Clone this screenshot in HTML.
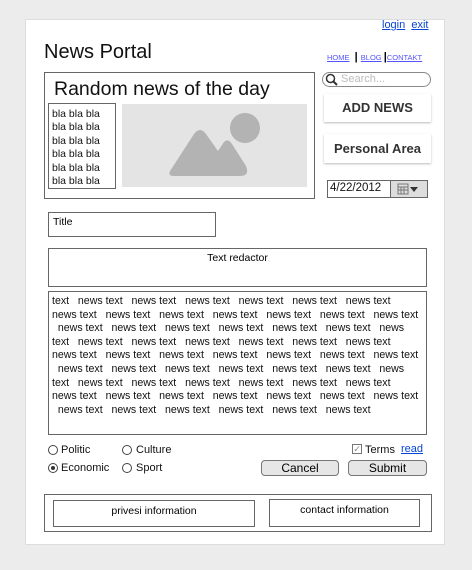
<!DOCTYPE html>
<html><head><style>
body{margin:0;width:472px;height:570px;background:#ececec;font-family:"Liberation Sans",Arial,sans-serif;position:relative;overflow:hidden}
.a{position:absolute}
.card{left:25px;top:19px;width:420px;height:526px;background:#fff;border:1px solid #ddd;box-sizing:border-box}
.box{border:1px solid #666;box-sizing:border-box;background:#fff}
a{color:#0645d6;text-decoration:underline}
.nt{font-size:10.6px;color:#111;white-space:pre;line-height:13.6px;letter-spacing:0}
.btn{background:#fff;box-shadow:0 1px 2px #bbb;font-weight:bold;color:#333;text-align:center;font-size:13px}
.gb{background:#e6e6e6;border:1px solid #777;border-radius:4px;box-sizing:border-box;text-align:center;font-size:12px;line-height:15px}
.rad{width:10px;height:10px;border:1px solid #444;border-radius:50%;box-sizing:border-box}
.lbl{font-size:11px;color:#111}
</style></head><body>
<div class="a card"></div>
<div class="a" style="left:382px;top:19px;font-size:11px"><a>login</a>&nbsp; <a>exit</a></div>
<div class="a" style="left:44px;top:41px;font-size:20px;color:#111">News Portal</div>
<div class="a" style="left:327px;top:51px;font-size:7.5px"><a style="color:#55f">HOME</a> <b style="font-size:11px;color:#000;text-decoration:none">&nbsp;|&nbsp;</b><a style="color:#55f">BLOG</a> <b style="font-size:11px;color:#000">|</b><a style="color:#55f">CONTAKT</a></div>
<div class="a box" style="left:44px;top:72px;width:271px;height:127px;border-width:1.5px"></div>
<div class="a" style="left:54px;top:78px;font-size:19.5px;color:#111">Random news of the day</div>
<div class="a box" style="left:48px;top:103px;width:68px;height:86px"></div>
<div class="a" style="left:52px;top:108px;font-size:10.5px;line-height:13.4px;color:#111">bla bla bla<br>bla bla bla<br>bla bla bla<br>bla bla bla<br>bla bla bla<br>bla bla bla</div>
<div class="a" style="left:122px;top:104px;width:185px;height:83px;background:#e4e4e4"></div>
<svg class="a" style="left:122px;top:104px" width="185" height="83"><circle cx="123" cy="24" r="15" fill="#b3b3b3"/><path d="M50 64 L72 30 Q78 22 84 30 L96 47 L102 38 Q106 34 110 40 L124 62 Q128 72 118 72 L52 72 Q44 72 50 64Z" fill="#b3b3b3"/></svg>
<div class="a" style="left:322px;top:72px;width:109px;height:15px;border:1px solid #888;border-radius:8px;box-sizing:border-box"></div>
<svg class="a" style="left:325px;top:73px" width="14" height="14"><circle cx="5.5" cy="5.5" r="4" fill="none" stroke="#333" stroke-width="1.5"/><line x1="8.5" y1="8.5" x2="12" y2="12" stroke="#333" stroke-width="2"/></svg>
<div class="a" style="left:341px;top:73px;font-size:11px;color:#bbb">Search...</div>
<div class="a btn" style="left:324px;top:94px;width:107px;height:28px;line-height:28px">ADD NEWS</div>
<div class="a btn" style="left:324px;top:134px;width:107px;height:29px;line-height:29px">Personal Area</div>
<div class="a box" style="left:327px;top:180px;width:101px;height:18px"></div>
<div class="a" style="left:330px;top:182px;font-size:11.5px;color:#111">4/22/2012</div>
<div class="a" style="left:390px;top:180px;width:38px;height:18px;background:#ddd;border:1px solid #666;box-sizing:border-box"></div>
<svg class="a" style="left:397px;top:183px" width="24" height="12"><rect x="1" y="1" width="10" height="10" fill="none" stroke="#777"/><path d="M1 4h10M4 4v7M7 4v7M1 7h10" stroke="#777"/><path d="M13 4h8l-4 5z" fill="#333"/></svg>
<div class="a box" style="left:48px;top:212px;width:168px;height:25px"></div>
<div class="a" style="left:53px;top:216px;font-size:10.5px">Title</div>
<div class="a box" style="left:48px;top:248px;width:379px;height:39px"></div>
<div class="a" style="left:48px;top:252px;width:379px;text-align:center;font-size:10.5px">Text redactor</div>
<div class="a box" style="left:48px;top:291px;width:379px;height:144px"></div>
<div class="a nt" style="left:52px;top:295px">text   news text   news text   news text   news text   news text   news text
news text   news text   news text   news text   news text   news text   news text
  news text   news text   news text   news text   news text   news text   news
text   news text   news text   news text   news text   news text   news text
news text   news text   news text   news text   news text   news text   news text
  news text   news text   news text   news text   news text   news text   news
text   news text   news text   news text   news text   news text   news text
news text   news text   news text   news text   news text   news text   news text
  news text   news text   news text   news text   news text   news text</div>
<div class="a rad" style="left:48px;top:445px"></div><div class="a lbl" style="left:61px;top:444px">Politic</div>
<div class="a rad" style="left:122px;top:445px"></div><div class="a lbl" style="left:136px;top:444px">Culture</div>
<div class="a rad" style="left:48px;top:463px"></div><div class="a" style="left:51px;top:466px;width:4px;height:4px;background:#333;border-radius:50%"></div><div class="a lbl" style="left:61px;top:462px">Economic</div>
<div class="a rad" style="left:122px;top:463px"></div><div class="a lbl" style="left:136px;top:462px">Sport</div>
<div class="a" style="left:352px;top:444px;width:10px;height:10px;border:1px solid #777;box-sizing:border-box;font-size:9px;line-height:9px;color:#888;text-align:center">✓</div>
<div class="a lbl" style="left:365px;top:444px">Terms</div>
<div class="a" style="left:401px;top:443px;font-size:11px"><a>read</a></div>
<div class="a gb" style="left:261px;top:460px;width:78px;height:16px">Cancel</div>
<div class="a gb" style="left:348px;top:460px;width:79px;height:16px">Submit</div>
<div class="a box" style="left:44px;top:494px;width:388px;height:38px"></div>
<div class="a box" style="left:53px;top:500px;width:202px;height:27px"></div>
<div class="a" style="left:53px;top:505px;width:202px;text-align:center;font-size:10.5px">privesi information</div>
<div class="a box" style="left:269px;top:499px;width:151px;height:28px"></div>
<div class="a" style="left:269px;top:504px;width:151px;text-align:center;font-size:10.5px">contact information</div>
</body></html>
